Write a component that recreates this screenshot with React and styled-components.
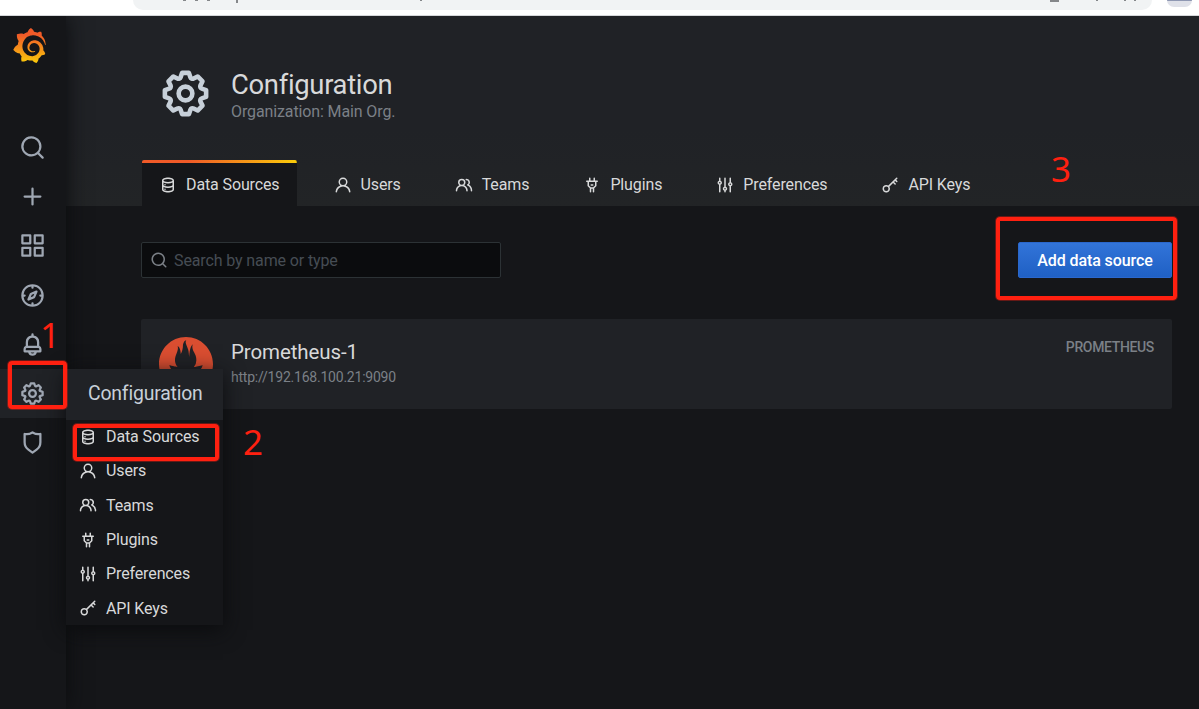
import React from "react";
import styled, { createGlobalStyle } from "styled-components";
import { SiGrafana, SiPrometheus } from "react-icons/si";

const GlobalStyle = createGlobalStyle`
  * {
    box-sizing: border-box;
  }
  body {
    margin: 0;
    overflow: hidden;
    background: #151619;
    color: #d8d9da;
    font-family: Roboto, sans-serif;
    font-size: 16px;
    letter-spacing: -0.12px;
  }
`;

const icons = {
  search:
    "M21.71,20.29,18,16.61A9,9,0,1,0,16.61,18l3.68,3.68a1,1,0,0,0,1.42,0A1,1,0,0,0,21.71,20.29ZM11,18a7,7,0,1,1,7-7A7,7,0,0,1,11,18Z",
  plus: "M19,11H13V5a1,1,0,0,0-2,0v6H5a1,1,0,0,0,0,2h6v6a1,1,0,0,0,2,0V13h6a1,1,0,0,0,0-2Z",
  apps: "M10,13H3a1,1,0,0,0-1,1v7a1,1,0,0,0,1,1h7a1,1,0,0,0,1-1V14A1,1,0,0,0,10,13ZM9,20H4V15H9ZM21,2H14a1,1,0,0,0-1,1v7a1,1,0,0,0,1,1h7a1,1,0,0,0,1-1V3A1,1,0,0,0,21,2ZM20,9H15V4h5Zm1,4H14a1,1,0,0,0-1,1v7a1,1,0,0,0,1,1h7a1,1,0,0,0,1-1V14A1,1,0,0,0,21,13Zm-1,7H15V15h5ZM10,2H3A1,1,0,0,0,2,3v7a1,1,0,0,0,1,1h7a1,1,0,0,0,1-1V3A1,1,0,0,0,10,2ZM9,9H4V4H9Z",
  compass:
    "M12,2A10,10,0,1,0,22,12,10,10,0,0,0,12,2Zm1,17.93V19a1,1,0,0,0-2,0v.93A8,8,0,0,1,4.07,13H5a1,1,0,0,0,0-2H4.07A8,8,0,0,1,11,4.07V5a1,1,0,0,0,2,0V4.07A8,8,0,0,1,19.93,11H19a1,1,0,0,0,0,2h.93A8,8,0,0,1,13,19.93ZM15.14,7.55l-5,2.12a1,1,0,0,0-.52.52l-2.12,5a1,1,0,0,0,.21,1.1,1,1,0,0,0,.7.3.93.93,0,0,0,.4-.09l5-2.12a1,1,0,0,0,.52-.52l2.12-5a1,1,0,0,0-1.31-1.31Zm-2.49,5.1-2.28,1,1-2.28,2.28-1Z",
  bell: "M18,13.18V10a6,6,0,0,0-5-5.91V3a1,1,0,0,0-2,0V4.09A6,6,0,0,0,6,10v3.18A3,3,0,0,0,4,16v2a1,1,0,0,0,1,1H8.14a4,4,0,0,0,7.72,0H19a1,1,0,0,0,1-1V16A3,3,0,0,0,18,13.18ZM8,10a4,4,0,0,1,8,0v3H8Zm4,10a2,2,0,0,1-1.72-1h3.44A2,2,0,0,1,12,20Zm6-3H6V16a1,1,0,0,1,1-1H17a1,1,0,0,1,1,1Z",
  cog: "M21.32,9.55l-1.89-.63.89-1.78A1,1,0,0,0,20.13,6L18,3.87a1,1,0,0,0-1.15-.19l-1.78.89-.63-1.89A1,1,0,0,0,13.5,2h-3a1,1,0,0,0-.95.68L8.92,4.57,7.14,3.68A1,1,0,0,0,6,3.87L3.87,6a1,1,0,0,0-.19,1.15l.89,1.78-1.89.63A1,1,0,0,0,2,10.5v3a1,1,0,0,0,.68.95l1.89.63-.89,1.78A1,1,0,0,0,3.87,18L6,20.13a1,1,0,0,0,1.15.19l1.78-.89.63,1.89a1,1,0,0,0,.95.68h3a1,1,0,0,0,.95-.68l.63-1.89,1.78.89A1,1,0,0,0,18,20.13L20.13,18a1,1,0,0,0,.19-1.15l-.89-1.78,1.89-.63A1,1,0,0,0,22,13.5v-3A1,1,0,0,0,21.32,9.55ZM20,12.78l-1.2.4A2,2,0,0,0,17.64,16l.57,1.14-1.1,1.1L16,17.64a2,2,0,0,0-2.79,1.16l-.4,1.2H11.22l-.4-1.2A2,2,0,0,0,8,17.64l-1.14.57-1.1-1.1L6.36,16A2,2,0,0,0,5.2,13.18L4,12.78V11.22l1.2-.4A2,2,0,0,0,6.36,8L5.79,6.89l1.1-1.1L8,6.36A2,2,0,0,0,10.82,5.2l.4-1.2h1.56l.4,1.2A2,2,0,0,0,16,6.36l1.14-.57,1.1,1.1L17.64,8a2,2,0,0,0,1.16,2.79l1.2.4ZM12,8a4,4,0,1,0,4,4A4,4,0,0,0,12,8Zm0,6a2,2,0,1,1,2-2A2,2,0,0,1,12,14Z",
  shield:
    "M19.63,3.65a1,1,0,0,0-.84-.2,8,8,0,0,1-6.22-1.27,1,1,0,0,0-1.14,0A8,8,0,0,1,5.21,3.45a1,1,0,0,0-.84.2A1,1,0,0,0,4,4.43v7.45a9,9,0,0,0,3.77,7.33l3.65,2.6a1,1,0,0,0,1.16,0l3.65-2.6A9,9,0,0,0,20,11.88V4.43A1,1,0,0,0,19.63,3.65ZM18,11.88a7,7,0,0,1-2.93,5.7L12,19.77,8.93,17.58A7,7,0,0,1,6,11.88V5.58a10,10,0,0,0,6-1.39,10,10,0,0,0,6,1.39Z",
  database:
    "M8,16.5a1,1,0,1,0,1,1A1,1,0,0,0,8,16.5ZM12,2C8,2,4,3.37,4,6V18c0,2.63,4,4,8,4s8-1.37,8-4V6C20,3.37,16,2,12,2Zm6,16c0,.71-2.28,2-6,2s-6-1.29-6-2V14.73A13.16,13.16,0,0,0,12,16a13.16,13.16,0,0,0,6-1.27Zm0-6c0,.71-2.28,2-6,2s-6-1.29-6-2V8.73A13.16,13.16,0,0,0,12,10a13.16,13.16,0,0,0,6-1.27ZM12,8C8.28,8,6,6.71,6,6s2.28-2,6-2,6,1.29,6,2S15.72,8,12,8ZM8,10.5a1,1,0,1,0,1,1A1,1,0,0,0,8,10.5Z",
  user: "M15.71,12.71a6,6,0,1,0-7.42,0,10,10,0,0,0-6.22,8.18,1,1,0,0,0,2,.22,8,8,0,0,1,15.9,0,1,1,0,0,0,1,.89h.11a1,1,0,0,0,.88-1.1A10,10,0,0,0,15.71,12.71ZM12,12a4,4,0,1,1,4-4A4,4,0,0,1,12,12Z",
  users:
    "M12.3,12.22A4.92,4.92,0,0,0,14,8.5a5,5,0,0,0-10,0,4.92,4.92,0,0,0,1.7,3.72A8,8,0,0,0,1,19.5a1,1,0,0,0,2,0,6,6,0,0,1,12,0,1,1,0,0,0,2,0A8,8,0,0,0,12.3,12.22ZM9,11.5a3,3,0,1,1,3-3A3,3,0,0,1,9,11.5Zm9.74.32A5,5,0,0,0,15,3.5a1,1,0,0,0,0,2,3,3,0,0,1,3,3,3,3,0,0,1-1.5,2.59,1,1,0,0,0-.5.84,1,1,0,0,0,.45.86l.39.26.13.07a7,7,0,0,1,4,6.38,1,1,0,0,0,2,0A9,9,0,0,0,18.74,11.82Z",
  plug: "M19,6H16V3a1,1,0,0,0-2,0V6H10V3A1,1,0,0,0,8,3V6H5A1,1,0,0,0,5,8H6v5a1,1,0,0,0,.29.71L9,16.41V21a1,1,0,0,0,2,0V17h2v4a1,1,0,0,0,2,0V16.41l2.71-2.7A1,1,0,0,0,18,13V8h1a1,1,0,0,0,0-2Zm-3,6.59L13.59,15H10.41L8,12.59V8h8ZM11,13h2a1,1,0,0,0,0-2H11a1,1,0,0,0,0,2Z",
  sliders:
    "M20,8.18V3a1,1,0,0,0-2,0V8.18a3,3,0,0,0,0,5.64V21a1,1,0,0,0,2,0V13.82a3,3,0,0,0,0-5.64ZM19,12a1,1,0,1,1,1-1A1,1,0,0,1,19,12Zm-6,2.18V3a1,1,0,0,0-2,0V14.18a3,3,0,0,0,0,5.64V21a1,1,0,0,0,2,0V19.82a3,3,0,0,0,0-5.64ZM12,18a1,1,0,1,1,1-1A1,1,0,0,1,12,18ZM6,6.18V3A1,1,0,0,0,4,3V6.18a3,3,0,0,0,0,5.64V21a1,1,0,0,0,2,0V11.82A3,3,0,0,0,6,6.18ZM5,10A1,1,0,1,1,6,9,1,1,0,0,1,5,10Z",
  key: "M21.71,6.53,20.29,5.12l1.42-1.41a1,1,0,1,0-1.42-1.42L9.75,12.83a5,5,0,1,0,1.42,1.42l4.88-4.89,2.13,2.12a1,1,0,0,0,1.41-1.41L17.46,8l1.42-1.41L20.29,8a1,1,0,0,0,.71.29A1,1,0,0,0,21.71,8,1,1,0,0,0,21.71,6.53ZM7,20a3,3,0,1,1,3-3A3,3,0,0,1,7,20Z",
};

const pages = [
  { icon: "database", label: "Data Sources" },
  { icon: "user", label: "Users" },
  { icon: "users", label: "Teams" },
  { icon: "plug", label: "Plugins" },
  { icon: "sliders", label: "Preferences" },
  { icon: "key", label: "API Keys" },
];

const Svg = styled.svg`
  flex: none;
  display: block;
  width: ${(props) => props.$size}px;
  height: ${(props) => props.$size}px;
  fill: currentColor;
`;

const Icon = ({ name, size }) => (
  <Svg $size={size} viewBox="0 0 24 24">
    <path d={icons[name]} />
  </Svg>
);

const Screen = styled.div`
  position: relative;
  display: flex;
  flex-direction: column;
  width: 1199px;
  height: 709px;
  overflow: hidden;
`;

const BrowserBar = styled.div`
  position: relative;
  z-index: 2;
  display: flex;
  flex: none;
  height: 16px;
  padding-left: 133px;
  background: #ffffff;
  border-bottom: 1px solid #d5d7da;
`;

const AddressBar = styled.div`
  display: flex;
  align-items: flex-start;
  justify-content: flex-end;
  width: 1019px;
  height: 10px;
  padding-right: 16px;
  border-radius: 0 0 18px 18px;
  background: #f1f3f4;
`;

const AddressMark = styled.span`
  width: ${(props) => props.$width}px;
  height: ${(props) => props.$height || 1}px;
  margin-right: ${(props) => props.$space || 0}px;
  background: #85878a;
`;

const UrlMarks = styled.div`
  display: flex;
  flex: 1;
  padding-left: 50px;
`;

const Avatar = styled.div`
  width: 25px;
  height: 7px;
  margin-left: 15px;
  border-radius: 0 0 13px 13px;
  background: linear-gradient(#8f98b3 1px, #dfe1e9 1px);
`;

const Shell = styled.div`
  display: flex;
  flex: 1;
  min-height: 0;
`;

const Sidebar = styled.nav`
  position: relative;
  z-index: 1;
  display: flex;
  flex-direction: column;
  flex: none;
  width: 66px;
  background: #151619;
  box-shadow: 0 0 20px #0b0c0e;
`;

const LogoLink = styled.div`
  display: flex;
  justify-content: center;
  height: 107px;
  padding: 12px 7px 0 0;
`;

const GrafanaLogo = styled(SiGrafana)`
  width: 35px;
  height: 35px;
  path {
    fill: url(#flame);
  }
`;

const SideItem = styled.div`
  position: relative;
  display: flex;
  align-items: center;
  justify-content: center;
  height: 49.2px;
  padding-right: 1px;
  color: #9fa7b3;
  background: ${(props) => (props.$active ? "#202226" : "transparent")};
`;

const Menu = styled.div`
  position: absolute;
  top: 0;
  left: 66px;
  width: 157px;
  height: 256px;
  background: #151619;
  box-shadow: 0 5px 20px #0b0c0e;
`;

const MenuHeader = styled.div`
  height: 50.6px;
  padding-left: 22px;
  line-height: 49px;
  font-size: 19.4px;
  letter-spacing: -0.18px;
  color: #c7d0d9;
  background: #202226;
`;

const MenuItem = styled.div`
  display: flex;
  align-items: center;
  gap: 9px;
  height: 34.3px;
  padding-left: 13px;
  color: #d8d9da;
`;

const Main = styled.main`
  flex: 1;
  min-width: 0;
`;

const Header = styled.header`
  display: flex;
  flex-direction: column;
  justify-content: space-between;
  height: 190px;
  padding: 49px 0 0 76px;
  background: linear-gradient(#202226 60%, #222426);
`;

const PageTitle = styled.div`
  display: flex;
  align-items: flex-start;
  gap: 18px;
  height: 58px;
  padding: 1px 0 0 16px;
  color: #c7d0d9;
`;

const Heading = styled.div`
  padding-top: 3px;
`;

const Title = styled.h1`
  margin: 0;
  font-size: 27.4px;
  line-height: 33px;
  font-weight: 400;
  letter-spacing: -0.3px;
  color: #d8d9da;
`;

const Subtitle = styled.div`
  font-size: 16px;
  line-height: 20px;
  color: #7b8087;
`;

const Tabs = styled.div`
  display: flex;
  gap: 20px;
`;

const Tab = styled.div`
  display: flex;
  align-items: center;
  gap: 9px;
  height: 46px;
  padding: 3px 17px 0 17px;
  border-radius: 2px 2px 0 0;
  background: ${(props) =>
    props.$active
      ? "linear-gradient(to right, #f05a28 30%, #fbca0a 99%) top / 100% 3px no-repeat, #151619"
      : "transparent"};
`;

const Content = styled.div`
  padding: 36px 27px 0 75px;
`;

const ActionBar = styled.div`
  display: flex;
  justify-content: space-between;
  margin-bottom: 41px;
`;

const SearchBox = styled.div`
  display: flex;
  align-items: center;
  gap: 6px;
  width: 360px;
  height: 36px;
  padding-left: 8px;
  border: 1px solid #2c3235;
  border-radius: 2px;
  background: #0b0c0e;
  color: #7b8087;
`;

const Placeholder = styled.span`
  color: #464c54;
`;

const Button = styled.button`
  width: 154px;
  height: 36px;
  padding: 0;
  border: 1px solid #2a67cc;
  border-radius: 2px;
  background: linear-gradient(#3274d9, #1f60c4);
  color: #ffffff;
  font: 500 16px Roboto, sans-serif;
  letter-spacing: -0.1px;
`;

const Card = styled.div`
  display: flex;
  height: 90px;
  padding: 18px;
  border-radius: 2px;
  background: #202226;
`;

const PrometheusLogo = styled(SiPrometheus)`
  width: 54px;
  height: 54px;
  color: #da4e31;
`;

const CardText = styled.div`
  flex: 1;
  padding-left: 18px;
`;

const CardName = styled.div`
  font-size: 20.5px;
  line-height: 30px;
  letter-spacing: -0.1px;
`;

const CardUrl = styled.div`
  font-size: 14px;
  line-height: 20px;
  letter-spacing: -0.22px;
  color: #7b8087;
`;

const CardType = styled.div`
  font-size: 14px;
  font-weight: 500;
  line-height: 20px;
  letter-spacing: -0.35px;
  color: #7b8087;
`;

// Numbered callouts drawn over the page
const Callout = styled.div`
  position: absolute;
  z-index: 2;
  left: ${(props) => props.$x}px;
  top: ${(props) => props.$y}px;
  width: ${(props) => props.$w}px;
  height: ${(props) => props.$h}px;
  border: 4px solid #ff2010;
  border-radius: 4px;
  box-shadow: 0 0 0 1px rgba(255, 32, 16, 0.35);
`;

const Step = styled.div`
  position: absolute;
  z-index: 2;
  left: ${(props) => props.$x}px;
  top: ${(props) => props.$y}px;
  font: 35px/40px "Noto Sans", sans-serif;
  color: #ff2010;
`;

const sideIcons = ["search", "plus", "apps", "compass", "bell", "cog", "shield"];

const ConfigMenu = () => (
  <Menu>
    <MenuHeader>Configuration</MenuHeader>
    {pages.map((page) => (
      <MenuItem key={page.label}>
        <Icon name={page.icon} size={18} />
        {page.label}
      </MenuItem>
    ))}
  </Menu>
);

const App = () => {
  return (
    <>
      <GlobalStyle />
      <Screen>
        <BrowserBar>
          <AddressBar>
            <UrlMarks>
              <AddressMark $width={3} $space={9} />
              <AddressMark $width={3} $space={9} />
              <AddressMark $width={3} $space={26} />
              <AddressMark $width={2} $height={3} $space={182} />
              <AddressMark $width={2} />
            </UrlMarks>
            <AddressMark $width={9} $height={2} $space={37} />
            <AddressMark $width={2} $space={26} />
            <AddressMark $width={2} $space={8} />
            <AddressMark $width={2} />
          </AddressBar>
          <Avatar />
        </BrowserBar>
        <Shell>
          <Sidebar>
            <LogoLink>
              <svg width="0" height="0">
                <linearGradient id="flame" x1="0" y1="0" x2="0" y2="1">
                  <stop offset="0.2" stopColor="#f05a28" />
                  <stop offset="1" stopColor="#fbca0a" />
                </linearGradient>
              </svg>
              <GrafanaLogo />
            </LogoLink>
            {sideIcons.map((name) => (
              <SideItem key={name} $active={name === "cog"}>
                <Icon name={name} size={27} />
                {name === "cog" && <ConfigMenu />}
              </SideItem>
            ))}
          </Sidebar>
          <Main>
            <Header>
              <PageTitle>
                <Icon name="cog" size={55} />
                <Heading>
                  <Title>Configuration</Title>
                  <Subtitle>Organization: Main Org.</Subtitle>
                </Heading>
              </PageTitle>
              <Tabs>
                {pages.map((page, i) => (
                  <Tab key={page.label} $active={i === 0}>
                    <Icon name={page.icon} size={18} />
                    {page.label}
                  </Tab>
                ))}
              </Tabs>
            </Header>
            <Content>
              <ActionBar>
                <SearchBox>
                  <Icon name="search" size={18} />
                  <Placeholder>Search by name or type</Placeholder>
                </SearchBox>
                <Button>Add data source</Button>
              </ActionBar>
              <Card>
                <PrometheusLogo />
                <CardText>
                  <CardName>Prometheus-1</CardName>
                  <CardUrl>http://192.168.100.21:9090</CardUrl>
                </CardText>
                <CardType>PROMETHEUS</CardType>
              </Card>
            </Content>
          </Main>
        </Shell>
        <Callout $x={8} $y={361} $w={59} $h={48} />
        <Callout $x={73} $y={424} $w={146} $h={37} />
        <Callout $x={996} $y={217} $w={181} $h={83} />
        <Step $x={40} $y={315}>1</Step>
        <Step $x={243} $y={422}>2</Step>
        <Step $x={1051} $y={149}>3</Step>
      </Screen>
    </>
  );
};

export default App;
